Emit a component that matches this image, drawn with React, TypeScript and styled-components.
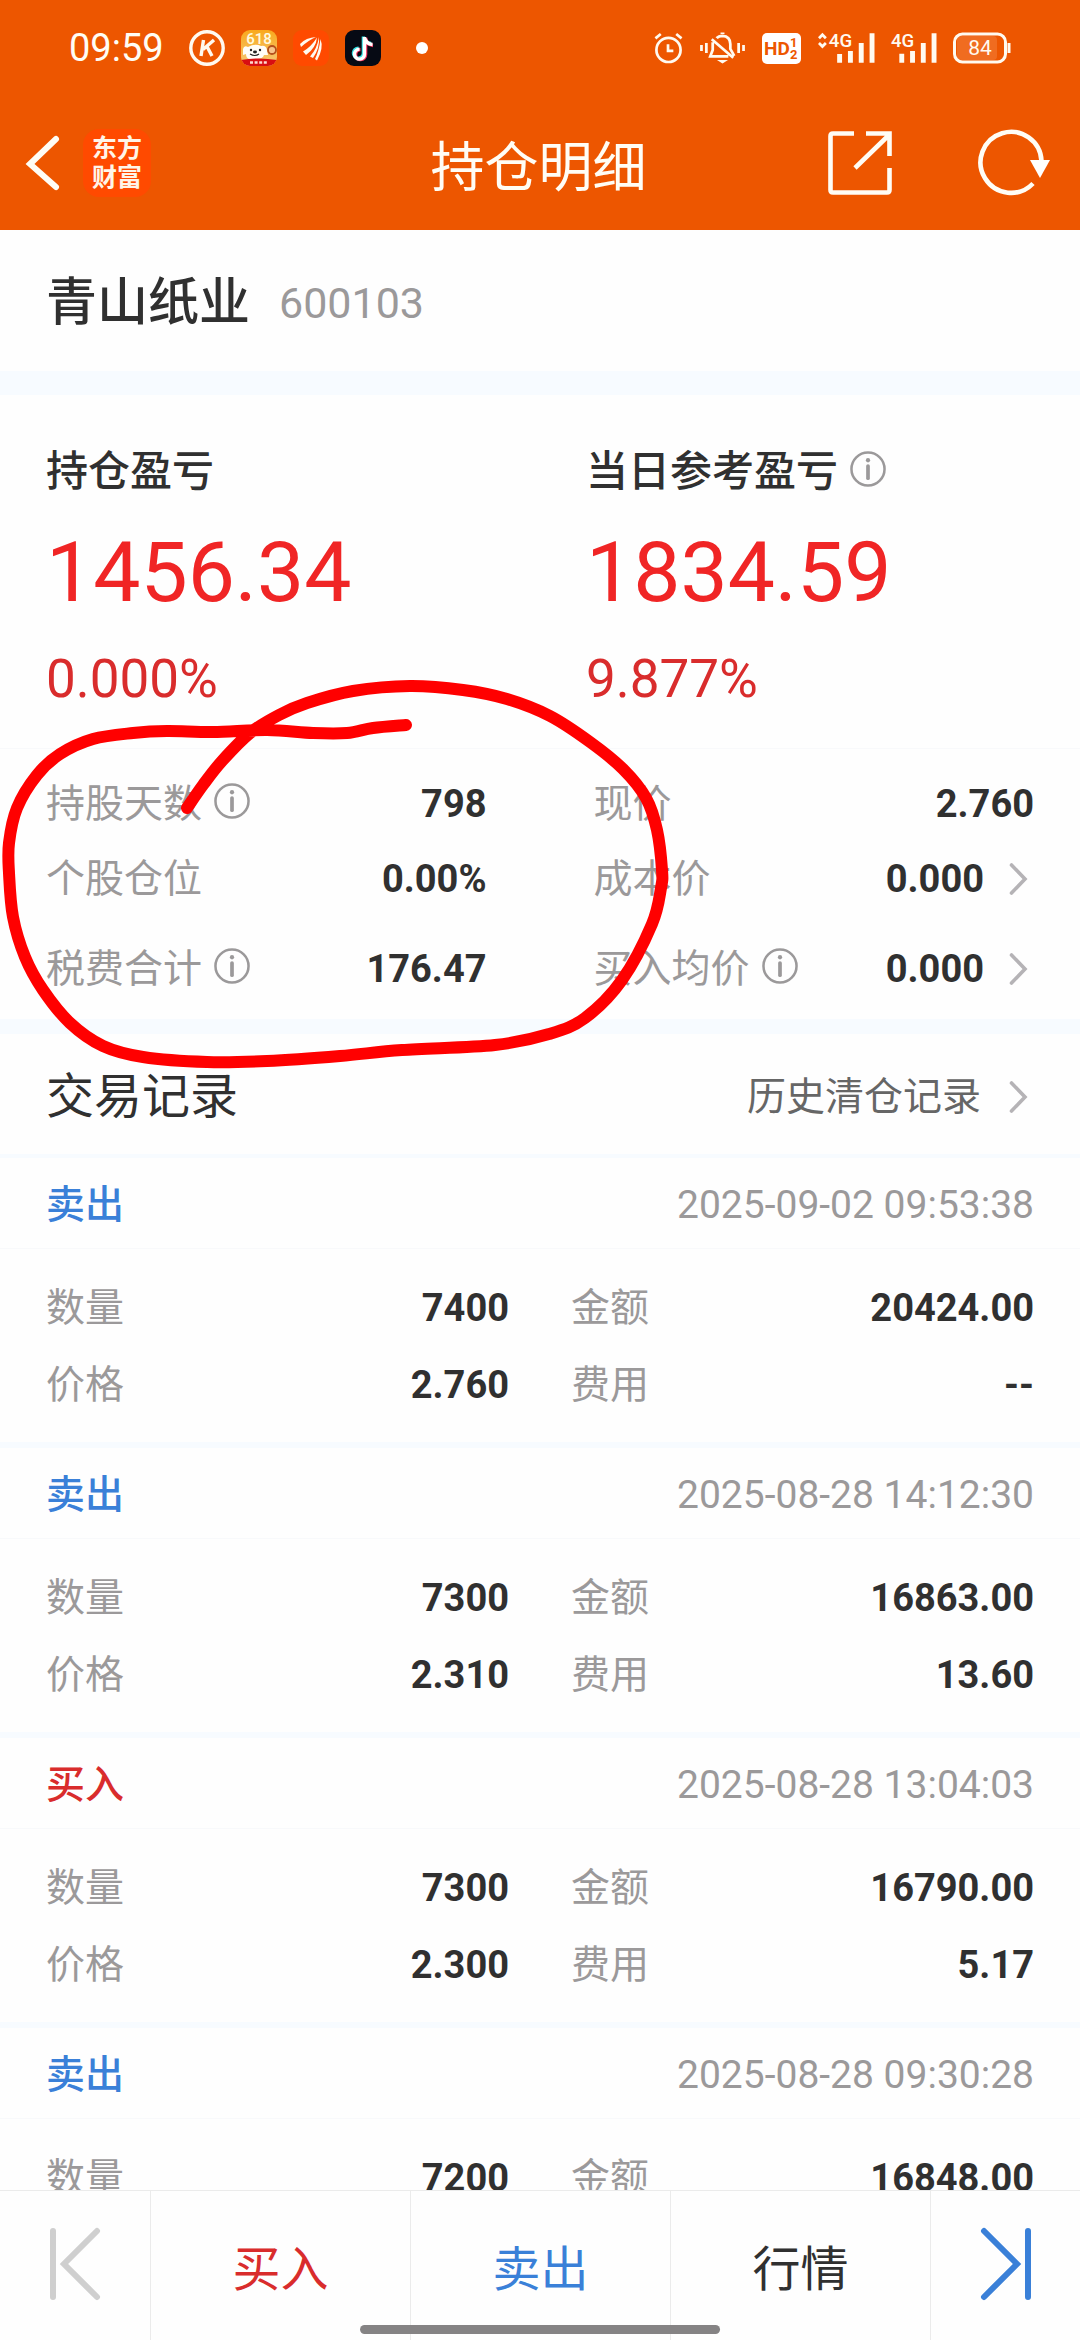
import React from "react";
import styled, { createGlobalStyle } from "styled-components";

const color = {
  brand: "#ed5600",
  logo: "#ff4a00",
  ink: "#303030",
  sub: "#666666",
  muted: "#9b999a",
  chevron: "#b5b3b6",
  red: "#d92c2c",
  brightRed: "#f02525",
  blue: "#3a80d8",
  band: "#f7fbff",
  hairline: "#f8f9fb",
  border: "#ebebeb",
};

const GlobalStyle = createGlobalStyle`
  * { box-sizing: border-box; }
  body { margin: 0; background: #fefefe; }
  body, button, a {
    font-family: Roboto, "Noto Sans CJK SC", sans-serif;
  }
  button {
    padding: 0;
    border: 0;
    background: none;
    color: inherit;
    cursor: pointer;
  }
  svg { display: block; flex: none; overflow: visible; }
`;

const Screen = styled.div`
  display: flex;
  flex-direction: column;
  height: 100vh;
  background: #fefefe;
  color: ${color.ink};
`;

/* Top area */

const Top = styled.header`
  flex: none;
  height: 230px;
  background: ${color.brand};
  color: #fffdf5;
`;

const StatusBar = styled.div`
  display: flex;
  align-items: center;
  justify-content: space-between;
  height: 96px;
  padding: 0 69px;
`;

const StatusGroup = styled.div<{ $gap: number }>`
  display: flex;
  align-items: center;
  gap: ${(p) => p.$gap}px;
`;

const Clock = styled.time`
  margin-right: 9px;
  font-size: 38px;
  line-height: 44px;
`;

const Dot = styled.span`
  width: 12px;
  height: 12px;
  margin-left: 19px;
  border-radius: 50%;
  background: #ffffff;
`;

const NavBar = styled.nav`
  display: grid;
  grid-template-columns: 1fr auto 1fr;
  align-items: center;
  height: 134px;
  padding: 0 29px 0 26px;
`;

const NavSide = styled.div<{ $end?: boolean }>`
  display: flex;
  align-items: center;
  justify-content: ${(p) => (p.$end ? "flex-end" : "flex-start")};
  gap: ${(p) => (p.$end ? 87 : 24)}px;
`;

const Title = styled.h1`
  margin: 12px 0 0;
  font-size: 54px;
  font-weight: 400;
  line-height: 64px;
`;

const BrandLogo = styled.span`
  display: grid;
  place-items: center;
  align-content: center;
  width: 68px;
  height: 68px;
  border-radius: 16px;
  background: ${color.logo};
  color: #fff5e8;
  font-size: 25px;
  font-weight: 700;
  line-height: 29px;
`;

/* Body */

const Content = styled.main`
  position: relative;
  flex: 1;
  min-height: 0;
  overflow: hidden;
`;

const Band = styled.div<{ $size: number }>`
  height: ${(p) => p.$size}px;
  background: ${color.band};
`;

const Stock = styled.section`
  display: flex;
  align-items: center;
  gap: 29px;
  height: 141px;
  padding: 5px 46px 0;
`;

const StockName = styled.h2`
  margin: 0;
  font-size: 51px;
  font-weight: 500;
  line-height: 60px;
`;

const StockCode = styled.span`
  color: ${color.muted};
  font-size: 43px;
  line-height: 60px;
`;

const Profit = styled.section`
  display: grid;
  grid-template-columns: 1fr 1fr;
  column-gap: 92px;
  padding: 47px 46px 39px;
`;

const ProfitLabel = styled.div`
  display: flex;
  align-items: center;
  gap: 12px;
  font-size: 42px;
  font-weight: 500;
  line-height: 60px;
`;

const ProfitValue = styled.div`
  margin-top: 21px;
  color: ${color.brightRed};
  font-size: 84px;
  line-height: 100px;
`;

const ProfitRate = styled.div`
  margin-top: 26px;
  color: ${color.red};
  font-size: 53px;
  line-height: 60px;
`;

const Details = styled.dl`
  margin: 0;
  padding: 25px 46px 20px;
  border-top: 1px solid ${color.hairline};
`;

const Pair = styled.div<{ $gap: number; $top?: number }>`
  display: grid;
  grid-template-columns: 1fr 1fr;
  column-gap: ${(p) => p.$gap}px;
  margin-top: ${(p) => p.$top ?? 0}px;
`;

const Field = styled.div`
  display: flex;
  align-items: center;
  justify-content: space-between;
  height: 60px;
`;

const FieldLabel = styled.dt`
  display: flex;
  align-items: center;
  gap: 12px;
  color: ${color.muted};
  font-size: 39px;
  line-height: 60px;
`;

const FieldValue = styled.dd`
  display: flex;
  align-items: center;
  margin: 0;
  font-size: 38px;
  font-weight: 700;
  line-height: 60px;
`;

const MoreButton = styled.button`
  display: flex;
  align-items: center;
  gap: 25px;
  padding-right: 6px;
  font: inherit;
`;

const InfoButton = styled.button`
  display: block;
  margin-bottom: 6px;
`;

const SectionHead = styled.div`
  display: flex;
  align-items: center;
  justify-content: space-between;
  height: 120px;
  padding: 6px 52px 0 46px;
`;

const SectionTitle = styled.h2`
  margin: 0;
  font-size: 48px;
  font-weight: 400;
  line-height: 60px;
`;

const HistoryLink = styled.a`
  display: flex;
  align-items: center;
  gap: 28px;
  color: ${color.sub};
  font-size: 39px;
  line-height: 60px;
  text-decoration: none;
`;

const Record = styled.article`
  border-bottom: 6px solid ${color.band};
`;

const RecordHead = styled.div`
  display: flex;
  align-items: center;
  justify-content: space-between;
  height: 90px;
  padding: 4px 46px 0;
`;

const Side = styled.h3<{ $buy: boolean }>`
  margin: 0;
  color: ${(p) => (p.$buy ? color.red : color.blue)};
  font-size: 39px;
  font-weight: 500;
  line-height: 60px;
`;

const RecordTime = styled.time`
  color: ${color.muted};
  font-size: 39px;
  line-height: 60px;
`;

const RecordBody = styled.dl`
  margin: 0;
  padding: 29px 46px 27px;
  border-top: 1px solid ${color.hairline};
`;

const MarkerLayer = styled.svg`
  position: absolute;
  top: 440px;
  left: 0;
  pointer-events: none;
`;

/* Bottom bar */

const BottomBar = styled.footer`
  position: relative;
  flex: none;
  display: grid;
  grid-template-columns: 150px 1fr 1fr 1fr 150px;
  height: 150px;
  border-top: 1px solid ${color.border};
`;

const Tab = styled.button<{ $color: string }>`
  display: flex;
  align-items: center;
  justify-content: center;
  padding-top: 8px;
  color: ${(p) => p.$color};
  font-size: 48px;
  line-height: 60px;

  & + & { border-left: 1px solid ${color.border}; }
`;

const StepButton = styled(Tab)`
  padding: 0 0 4px;
`;

const HomeIndicator = styled.span`
  position: absolute;
  bottom: 6px;
  left: 50%;
  width: 33.33%;
  height: 9px;
  border-radius: 5px;
  background: #858384;
  transform: translateX(-50%);
`;

/* Icons */

const CircleK = () => (
  <svg width="36" height="36" viewBox="0 0 36 36" fill="none" stroke="#fffaf0">
    <circle cx="18" cy="18" r="16.2" strokeWidth="3.4" />
    <path d="M14.5 10 12 26M25 10 14 19.5M18 16.5 23 26" strokeWidth="3.4" />
  </svg>
);

const ShoppingIcon = () => (
  <svg width="36" height="36" viewBox="0 0 36 36">
    <defs>
      <clipPath id="shop-clip"><rect width="36" height="36" rx="9" /></clipPath>
      <linearGradient id="shop-bg" x1="0" y1="0" x2="0" y2="1">
        <stop offset="0" stopColor="#f9a91c" />
        <stop offset="1" stopColor="#f5c878" />
      </linearGradient>
    </defs>
    <g clipPath="url(#shop-clip)">
      <rect width="36" height="36" fill="url(#shop-bg)" />
      <text x="18" y="14" textAnchor="middle" fontSize="15" fontWeight="500" fill="#fffbe0" fontFamily="Roboto, sans-serif">618</text>
      <path d="M2 19Q3 15 7 17Q14 13 20 16Q25 15 26 20L27 25 23 25Q22 29 15 29H8Q5 28 5 24L2 25Z" fill="#fffdf8" />
      <circle cx="10" cy="20" r="1.2" fill="#222" />
      <ellipse cx="14" cy="22" rx="2" ry="1.4" fill="#222" />
      <circle cx="19" cy="20" r="1.2" fill="#222" />
      <path d="M9 24Q14 27 18 24" stroke="#222" strokeWidth="1.2" fill="none" />
      <circle cx="31" cy="20" r="4" fill="#f7c48b" stroke="#b5501c" strokeWidth="1.8" />
      <path d="M0 30Q18 27 36 30V36H0Z" fill="#d80e12" />
      <path d="M9 32.5H27" stroke="#ffd9cf" strokeWidth="2.6" strokeDasharray="3 1.6" />
    </g>
  </svg>
);

const WingIcon = () => (
  <svg width="36" height="36" viewBox="0 0 36 36">
    <rect width="36" height="36" rx="9" fill={color.logo} />
    <g fill="#fffaf0">
      <path d="M7 14Q13 7.500 23 7Q16 10 8 17Z" />
      <path d="M10 21.500Q18 17 24 7.500Q23 18 13 25Z" />
      <path d="M17 26.500Q24 19 26 7Q27 18 20 28Z" />
      <path d="M22 29Q26 21 27.500 9Q31 18 24 30.500Z" />
    </g>
  </svg>
);

const NoteIcon = () => (
  <svg width="36" height="36" viewBox="0 0 36 36" fill="none" strokeWidth="3.4">
    <rect width="36" height="36" rx="9" fill="#060a14" />
    <path d="M18.4 6.5V23.5A5 5 0 1 1 13.5 18.1M18.4 7Q20 13 26 13.500" stroke="#35e0e4" />
    <path d="M20.6 7.5V24.5A5 5 0 1 1 15.5 19.6M20.6 8Q22 15 28 15.5" stroke="#f5315c" />
    <path d="M19.5 7V24A5 5 0 1 1 14.5 19.1M19.5 7.5Q21 14 27.500 14.500" stroke="#ffffff" />
  </svg>
);

const AlarmIcon = () => (
  <svg width="29" height="32" viewBox="0 0 30 32" fill="none" stroke="#fffaf0">
    <circle cx="15" cy="18" r="12.5" strokeWidth="2.8" />
    <path d="M1.5 6 7 1.5M28.5 6 23 1.5M14.5 12V19H20" strokeWidth="2.8" />
  </svg>
);

const MuteIcon = () => (
  <svg width="45" height="32" viewBox="0 0 46 32" fill="none" stroke="#fffaf0" strokeWidth="2.8">
    <path d="M1.5 13V19M6.5 11V21M39.5 11V21M44.5 13V19" />
    <path d="M13 10V18L10.5 24.5H29M17 6Q19 3.5 23 3.5 31 4 31 12V17L35 24M12 7 34 26" />
    <path d="M20 29H26L23 31ZM21 1H25" fill="#fffaf0" strokeWidth="1.6" />
  </svg>
);

const HdIcon = () => (
  <svg width="39" height="31" viewBox="0 0 39 31" fontFamily="Roboto, sans-serif" fontWeight="700" fill={color.brand}>
    <rect width="39" height="31" rx="5" fill="#ffffff" />
    <text x="2" y="22" fontSize="19">HD</text>
    <text x="28" y="14" fontSize="13">1</text>
    <text x="28" y="26" fontSize="13">2</text>
  </svg>
);

const SignalIcon = ({ arrows }: { arrows?: boolean }) => (
  <svg width={arrows ? 56 : 45} height="32" viewBox={arrows ? "-11 0 57 32" : "0 0 46 32"}>
    {arrows && (
      <path d="M-10 6 -6.500 2.500 -3 6M-10 11 -6.500 14.500 -3 11" fill="none" stroke="#fffaf0" strokeWidth="2.800" />
    )}
    <text x="0" y="15" fontSize="19" fontWeight="500" fill="#fffaf0" fontFamily="Roboto, sans-serif">4G</text>
    <path d="M11 22V31M22 19V31M33 11V31M44 1V31" stroke="#fffaf0" strokeWidth="5" />
  </svg>
);

const BatteryIcon = () => (
  <svg width="58" height="32" viewBox="0 0 58 32">
    <rect x="4" y="4" width="40" height="24" rx="4" fill="#f06c20" />
    <rect x="1.500" y="2" width="51" height="28" rx="8" fill="none" stroke="#fffaf0" strokeWidth="3" />
    <path d="M56 11V21" stroke="#fffaf0" strokeWidth="3" />
    <text x="27" y="23" textAnchor="middle" fontSize="21" fill="#fffaf0" fontFamily="Roboto, sans-serif">84</text>
  </svg>
);

const BackIcon = () => (
  <svg width="33" height="56" viewBox="0 0 33 56" fill="none" stroke="#fffdf5" strokeWidth="6" strokeLinecap="round">
    <path d="M30 4 4 29 30 52" />
  </svg>
);

const ShareIcon = () => (
  <svg width="64" height="64" viewBox="0 0 64 64" fill="none" stroke="#fffdf5" strokeWidth="4.600">
    <path d="M26 2.500H5Q2.500 2.500 2.500 5V59Q2.500 61.500 5 61.500H59Q61.500 61.500 61.500 59V37M38 2.500H61.500V25M61 4 27 37" />
  </svg>
);

const RefreshIcon = () => (
  <svg width="72" height="66" viewBox="0 0 72 66">
    <path d="M62.500 31A30.500 30.500 0 1 0 54 53.500" fill="none" stroke="#fffdf5" strokeWidth="4.600" />
    <path d="M51 30H71L61 48Z" fill="#ffffff" />
  </svg>
);

const InfoIcon = () => (
  <svg width="36" height="36" viewBox="0 0 37 37" fill="none" stroke={color.muted}>
    <circle cx="18.500" cy="18.500" r="17" strokeWidth="2.600" />
    <path d="M18.500 15.500V28" strokeWidth="3.800" strokeLinecap="round" />
    <circle cx="18.500" cy="9.500" r="2.200" fill={color.muted} stroke="none" />
  </svg>
);

const ChevronIcon = () => (
  <svg width="19" height="34" viewBox="0 0 19 34" fill="none" stroke={color.chevron} strokeWidth="3.600" strokeLinecap="round">
    <path d="M2.500 3 16 17 2.500 31" />
  </svg>
);

const StepIcon = ({ forward }: { forward?: boolean }) => (
  <svg width="50" height="72" viewBox="0 0 50 72" fill="none" stroke="currentColor" strokeLinecap="round" strokeWidth="6">
    {forward ? <path d="M3 3 36 36 3 69M47 3V69" /> : <path d="M47 3 14 36 47 69M3 3V69" />}
  </svg>
);

/* Hand-drawn highlight around the position figures */

const strokePoints: [number, number][] = [
  [187, 808], [203, 785], [222, 761], [250, 733], [279, 715], [307, 703],
  [353, 691], [410, 686], [463, 690], [507, 699], [550, 716], [590, 742],
  [623, 769], [646, 798], [657, 830], [662, 870], [661, 888], [652, 924],
  [622, 980], [585, 1018], [549, 1034], [495, 1045], [402, 1050], [340, 1056],
  [267, 1061], [207, 1062], [143, 1057], [103, 1046], [70, 1023], [43, 990],
  [25, 957], [13, 917], [9, 873], [9, 843], [17, 808], [37, 775],
  [60, 754], [93, 739], [133, 733], [167, 731], [213, 732], [267, 730],
  [313, 733], [347, 733], [373, 728], [406, 725],
];

const smoothPath = (points: [number, number][]) => {
  const at = (i: number) => points[Math.max(0, Math.min(points.length - 1, i))];
  let d = `M${points[0].join(" ")}`;
  for (let i = 0; i < points.length - 1; i++) {
    const [a, b, c, e] = [at(i - 1), at(i), at(i + 1), at(i + 2)];
    d += `C${b[0] + (c[0] - a[0]) / 6} ${b[1] + (c[1] - a[1]) / 6} ${c[0] - (e[0] - b[0]) / 6} ${c[1] - (e[1] - b[1]) / 6} ${c[0]} ${c[1]}`;
  }
  return d;
};

const Marker = () => (
  <MarkerLayer width="680" height="410" viewBox="0 670 680 410" aria-hidden="true">
    <path d={smoothPath(strokePoints)} fill="none" stroke="#ff0000" strokeWidth="12" strokeLinecap="round" strokeLinejoin="round" />
  </MarkerLayer>
);

/* Data */

type Trade = { buy: boolean; time: string; qty: string; amount: string; price?: string; fee?: string };

const records: Trade[] = [
  { buy: false, time: "2025-09-02 09:53:38", qty: "7400", amount: "20424.00", price: "2.760", fee: "--" },
  { buy: false, time: "2025-08-28 14:12:30", qty: "7300", amount: "16863.00", price: "2.310", fee: "13.60" },
  { buy: true, time: "2025-08-28 13:04:03", qty: "7300", amount: "16790.00", price: "2.300", fee: "5.17" },
  { buy: false, time: "2025-08-28 09:30:28", qty: "7200", amount: "16848.00" },
];

type ItemProps = { label: string; value: string; info?: boolean; more?: boolean };

const Info = ({ label }: { label: string }) => (
  <InfoButton type="button" aria-label={label}>
    <InfoIcon />
  </InfoButton>
);

const Item = ({ label, value, info, more }: ItemProps) => (
  <Field>
    <FieldLabel>
      {label}
      {info && <Info label={label} />}
    </FieldLabel>
    <FieldValue>
      {more ? (
        <MoreButton type="button">
          {value}
          <ChevronIcon />
        </MoreButton>
      ) : (
        value
      )}
    </FieldValue>
  </Field>
);

export default function App() {
  return (
    <Screen>
      <GlobalStyle />
      <Top>
        <StatusBar>
          <StatusGroup $gap={16}>
            <Clock>09:59</Clock>
            <CircleK />
            <ShoppingIcon />
            <WingIcon />
            <NoteIcon />
            <Dot />
          </StatusGroup>
          <StatusGroup $gap={17}>
            <AlarmIcon />
            <MuteIcon />
            <HdIcon />
            <SignalIcon arrows />
            <SignalIcon />
            <BatteryIcon />
          </StatusGroup>
        </StatusBar>
        <NavBar>
          <NavSide>
            <button type="button" aria-label="返回"><BackIcon /></button>
            <BrandLogo><span>东方</span><span>财富</span></BrandLogo>
          </NavSide>
          <Title>持仓明细</Title>
          <NavSide $end>
            <button type="button" aria-label="分享"><ShareIcon /></button>
            <button type="button" aria-label="刷新"><RefreshIcon /></button>
          </NavSide>
        </NavBar>
      </Top>

      <Content>
        <Stock>
          <StockName>青山纸业</StockName>
          <StockCode>600103</StockCode>
        </Stock>
        <Band $size={24} />

        <Profit>
          <div>
            <ProfitLabel>持仓盈亏</ProfitLabel>
            <ProfitValue>1456.34</ProfitValue>
            <ProfitRate>0.000%</ProfitRate>
          </div>
          <div>
            <ProfitLabel>
              当日参考盈亏
              <Info label="当日参考盈亏" />
            </ProfitLabel>
            <ProfitValue>1834.59</ProfitValue>
            <ProfitRate>9.877%</ProfitRate>
          </div>
        </Profit>

        <Details>
          <Pair $gap={107}>
            <Item label="持股天数" value="798" info />
            <Item label="现价" value="2.760" />
          </Pair>
          <Pair $gap={107} $top={15}>
            <Item label="个股仓位" value="0.00%" />
            <Item label="成本价" value="0.000" more />
          </Pair>
          <Pair $gap={107} $top={30}>
            <Item label="税费合计" value="176.47" info />
            <Item label="买入均价" value="0.000" info more />
          </Pair>
        </Details>
        <Band $size={15} />

        <SectionHead>
          <SectionTitle>交易记录</SectionTitle>
          <HistoryLink href="#history">
            历史清仓记录
            <ChevronIcon />
          </HistoryLink>
        </SectionHead>
        <Band $size={4} />

        {records.map((r) => (
          <Record key={r.time}>
            <RecordHead>
              <Side $buy={r.buy}>{r.buy ? "买入" : "卖出"}</Side>
              <RecordTime>{r.time}</RecordTime>
            </RecordHead>
            <RecordBody>
              <Pair $gap={62}>
                <Item label="数量" value={r.qty} />
                <Item label="金额" value={r.amount} />
              </Pair>
              {r.price && r.fee && (
                <Pair $gap={62} $top={17}>
                  <Item label="价格" value={r.price} />
                  <Item label="费用" value={r.fee} />
                </Pair>
              )}
            </RecordBody>
          </Record>
        ))}
        <Marker />
      </Content>

      <BottomBar>
        <StepButton type="button" $color="#cfcfcf" aria-label="上一只"><StepIcon /></StepButton>
        <Tab type="button" $color={color.red}>买入</Tab>
        <Tab type="button" $color={color.blue}>卖出</Tab>
        <Tab type="button" $color={color.ink}>行情</Tab>
        <StepButton type="button" $color={color.blue} aria-label="下一只"><StepIcon forward /></StepButton>
        <HomeIndicator />
      </BottomBar>
    </Screen>
  );
}
